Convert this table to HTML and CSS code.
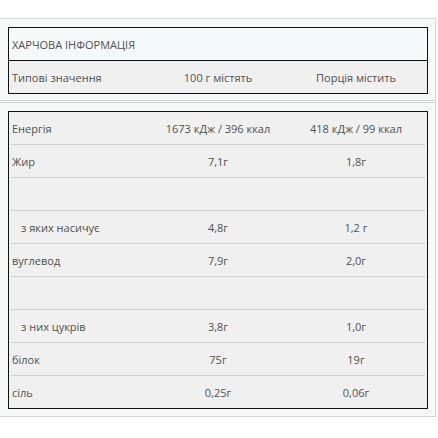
FILE: index.html
```html
<!DOCTYPE html>
<html lang="uk">
<head>
<meta charset="utf-8">
<link rel="stylesheet" href="styles.css">
</head>
<body>
<div class="page">
  <section class="panel panel-head">
    <div class="table">
      <div class="title">ХАРЧОВА ІНФОРМАЦІЯ</div>
      <div class="row">
        <div class="cell label">Типові значення</div>
        <div class="cell">100 г містять</div>
        <div class="cell">Порція містить</div>
      </div>
    </div>
  </section>
  <section class="panel panel-body">
    <div class="table inset">
      <div class="row"><div class="cell label">Енергія</div><div class="cell">1673 кДж / 396 ккал</div><div class="cell">418 кДж / 99 ккал</div></div>
      <div class="row"><div class="cell label">Жир</div><div class="cell">7,1г</div><div class="cell">1,8г</div></div>
      <div class="row"><div class="cell label"></div><div class="cell"></div><div class="cell"></div></div>
      <div class="row"><div class="cell label sub">з яких насичує</div><div class="cell">4,8г</div><div class="cell">1,2 г</div></div>
      <div class="row"><div class="cell label">вуглевод</div><div class="cell">7,9г</div><div class="cell">2,0г</div></div>
      <div class="row"><div class="cell label"></div><div class="cell"></div><div class="cell"></div></div>
      <div class="row"><div class="cell label sub">з них цукрів</div><div class="cell">3,8г</div><div class="cell">1,0г</div></div>
      <div class="row"><div class="cell label">білок</div><div class="cell">75г</div><div class="cell">19г</div></div>
      <div class="row"><div class="cell label">сіль</div><div class="cell">0,25г</div><div class="cell">0,06г</div></div>
    </div>
  </section>
</div>
</body>
</html>
```
FILE: styles.css
```css
* { box-sizing: border-box; }
html, body { margin: 0; padding: 0; background: #ffffff; }
body {
  font-family: "Open Sans", "Liberation Sans", sans-serif;
  font-size: 11px;
  color: #505050;
}
.page {
  padding-top: 18px;
  margin-left: -1px;
  width: 437px;
}
.panel {
  border: 1px solid #d4d6d6;
  background: #f7f8f8;
  padding: 8px 7px 6px 8px;
}
.panel-body {
  margin-top: 1px;
  padding-bottom: 7px;
  box-shadow: 0 1px 0 #e6e6e6;
}
.table {
  border: 1px solid #111;
  background: #f0f0f0;
}
.title {
  height: 33px;
  border-bottom: 1px solid #111;
  background: #f5fafa;
  display: flex;
  align-items: center;
  padding-left: 3px;
}
.row {
  display: grid;
  grid-template-columns: 1fr 1fr 1fr;
  height: 32px;
  align-items: center;
  padding: 0 2px;
}
.inset { padding: 0 2px; }
.inset .row {
  height: 33px;
  padding: 0;
  border-bottom: 1px solid #cfcfcf;
}
.inset .row:last-child {
  height: 32px;
  border-bottom: 0;
}
.cell {
  text-align: center;
  white-space: nowrap;
}
.cell.label {
  text-align: left;
  padding-left: 1px;
}
.cell.sub { padding-left: 10px; }
```
